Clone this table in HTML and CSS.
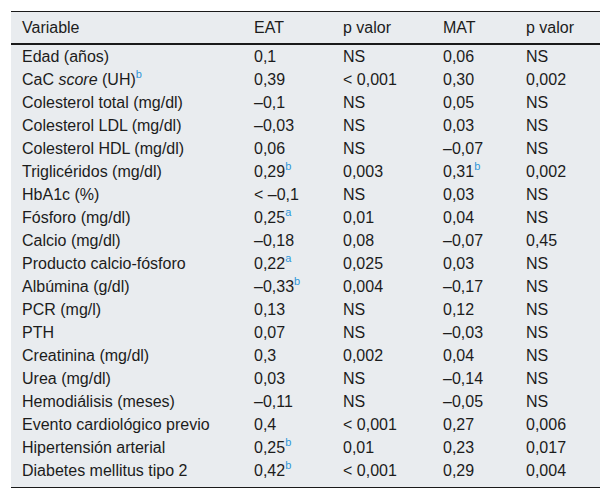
FILE: index.html
```html
<!DOCTYPE html>
<html lang="es">
<head>
<meta charset="utf-8">
<link rel="stylesheet" href="styles.css">
</head>
<body>
<table class="data">
<colgroup>
<col class="c1"><col class="c2"><col class="c3"><col class="c4"><col class="c5">
</colgroup>
<thead>
<tr><th>Variable</th><th>EAT</th><th>p valor</th><th>MAT</th><th>p valor</th></tr>
</thead>
<tbody>
<tr><td>Edad (años)</td><td>0,1</td><td>NS</td><td>0,06</td><td>NS</td></tr>
<tr><td>CaC <i>score</i> (UH)<sup>b</sup></td><td>0,39</td><td>&lt; 0,001</td><td>0,30</td><td>0,002</td></tr>
<tr><td>Colesterol total (mg/dl)</td><td>–0,1</td><td>NS</td><td>0,05</td><td>NS</td></tr>
<tr><td>Colesterol LDL (mg/dl)</td><td>–0,03</td><td>NS</td><td>0,03</td><td>NS</td></tr>
<tr><td>Colesterol HDL (mg/dl)</td><td>0,06</td><td>NS</td><td>–0,07</td><td>NS</td></tr>
<tr><td>Triglicéridos (mg/dl)</td><td>0,29<sup>b</sup></td><td>0,003</td><td>0,31<sup>b</sup></td><td>0,002</td></tr>
<tr><td>HbA1c (%)</td><td>&lt; –0,1</td><td>NS</td><td>0,03</td><td>NS</td></tr>
<tr><td>Fósforo (mg/dl)</td><td>0,25<sup>a</sup></td><td>0,01</td><td>0,04</td><td>NS</td></tr>
<tr><td>Calcio (mg/dl)</td><td>–0,18</td><td>0,08</td><td>–0,07</td><td>0,45</td></tr>
<tr><td>Producto calcio-fósforo</td><td>0,22<sup>a</sup></td><td>0,025</td><td>0,03</td><td>NS</td></tr>
<tr><td>Albúmina (g/dl)</td><td>–0,33<sup>b</sup></td><td>0,004</td><td>–0,17</td><td>NS</td></tr>
<tr><td>PCR (mg/l)</td><td>0,13</td><td>NS</td><td>0,12</td><td>NS</td></tr>
<tr><td>PTH</td><td>0,07</td><td>NS</td><td>–0,03</td><td>NS</td></tr>
<tr><td>Creatinina (mg/dl)</td><td>0,3</td><td>0,002</td><td>0,04</td><td>NS</td></tr>
<tr><td>Urea (mg/dl)</td><td>0,03</td><td>NS</td><td>–0,14</td><td>NS</td></tr>
<tr><td>Hemodiálisis (meses)</td><td>–0,11</td><td>NS</td><td>–0,05</td><td>NS</td></tr>
<tr><td>Evento cardiológico previo</td><td>0,4</td><td>&lt; 0,001</td><td>0,27</td><td>0,006</td></tr>
<tr><td>Hipertensión arterial</td><td>0,25<sup>b</sup></td><td>0,01</td><td>0,23</td><td>0,017</td></tr>
<tr class="last"><td>Diabetes mellitus tipo 2</td><td>0,42<sup>b</sup></td><td>&lt; 0,001</td><td>0,29</td><td>0,004</td></tr>
</tbody>
</table>
</body>
</html>
```
FILE: styles.css
```css
html, body {
  margin: 0;
  padding: 0;
  background: #ffffff;
}
body {
  padding: 11px 11px 0 11px;
  font-family: "Liberation Sans", Arial, sans-serif;
  font-size: 16px;
  color: #1c1c1c;
}
.data {
  border-collapse: collapse;
  width: 589px;
  background: #e9ecef;
  table-layout: fixed;
  border-top: 1px solid #1a1a1a;
  border-bottom: 1px solid #1a1a1a;
}
.c1 { width: 232px; }
.c2 { width: 89px; }
.c3 { width: 100px; }
.c4 { width: 83px; }
.c5 { width: 85px; }
.data th {
  font-weight: normal;
  text-align: left;
  height: 31px;
  padding: 0 0 0 11px;
  border-bottom: 2px solid #1a1a1a;
  line-height: 31px;
}
.data td {
  height: 23px;
  padding: 0 0 0 11px;
  line-height: 23px;
  white-space: nowrap;
  vertical-align: top;
}
.data tr.last td {
  padding-bottom: 5px;
}
.data sup {
  color: #2f96d8;
  font-size: 11px;
  line-height: 0;
  vertical-align: 7px;
}
```
